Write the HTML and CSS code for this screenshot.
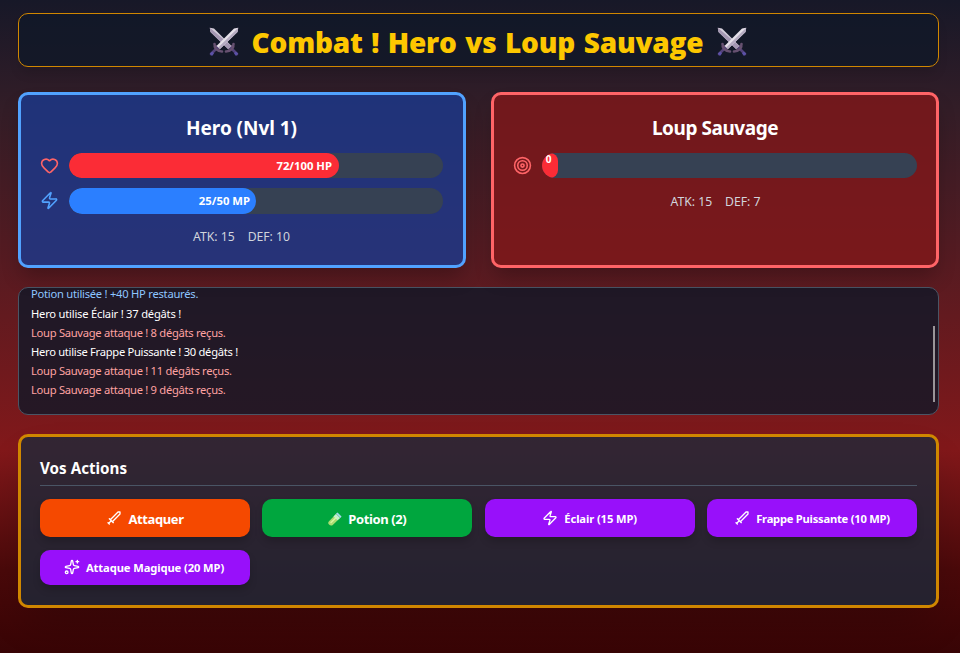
FILE: index.html
```html
<!DOCTYPE html>
<html lang="fr">
<head>
<meta charset="utf-8">
<title>Combat</title>
<link rel="stylesheet" href="styles.css">
</head>
<body>
<svg width="0" height="0" class="defs" aria-hidden="true">
  <defs>
    <symbol id="blades" viewBox="0 0 30 30">
      <path d="M4.500 19.500 8 18l4 6-2.500 1-5-5zM25.500 19.500 22 18l-4 6 2.500 1 5-5z" fill="#5d4869"/>
      <path d="M2 27 8 21M28 27l-6-6" stroke="#54427a" stroke-width="2.600"/>
      <path d="M.8 26.500 3.200 24.500 5 26.500 3 29zM29.200 26.500 26.800 24.500 25 26.500 27 29z" fill="#5b51a8"/>
      <path d="M.8.800 5 1.500 22.500 19 19 22 1.500 5z" fill="#d5cfdc"/>
      <path d="M.8.800 22.500 19 19 22 1.500 5z" fill="#a598b3"/>
      <path d="M29.200.800 25 1.500 7.500 19 11 22 28.500 5z" fill="#e5e0e9"/>
      <path d="M29.200.800 9.200 20.500 11 22 28.500 5z" fill="#b5abc1"/>
      <path d="M5.500 17c0 4.500 3 7.500 7.500 7.500M24.500 17c0 4.500-3 7.500-7.500 7.500" fill="none" stroke="#665070" stroke-width="2.600"/>
    </symbol>
    <symbol id="heart" viewBox="0 0 24 24"><path d="M2 9.500a5.500 5.500 0 0 1 9.591-3.676.56.56 0 0 0 .818 0A5.490 5.490 0 0 1 22 9.500c0 2.290-1.500 4-3 5.500l-5.492 5.313a2 2 0 0 1-3 .019L5 15c-1.500-1.500-3-3.200-3-5.500"/></symbol>
    <symbol id="zap" viewBox="0 0 24 24"><path d="M4 14a1 1 0 0 1-.78-1.630l9.900-10.200a.5.500 0 0 1 .86.460l-1.920 6.020A1 1 0 0 0 13 10h7a1 1 0 0 1 .78 1.630l-9.900 10.200a.5.500 0 0 1-.86-.46l1.920-6.020A1 1 0 0 0 11 14z"/></symbol>
    <symbol id="target" viewBox="0 0 24 24"><circle cx="12" cy="12" r="10"/><circle cx="12" cy="12" r="6"/><circle cx="12" cy="12" r="2"/></symbol>
    <symbol id="sword" viewBox="0 0 24 24"><path d="M14.500 17.500 3 6V3h3l11.500 11.500M13 19l6-6M16 16l4 4M19 21l2-2" transform="matrix(-1 0 0 1 24 0)"/></symbol>
    <symbol id="sparkles" viewBox="0 0 24 24"><path d="M11.017 2.814a1 1 0 0 1 1.966 0l1.051 5.558a2 2 0 0 0 1.594 1.594l5.558 1.051a1 1 0 0 1 0 1.966l-5.558 1.051a2 2 0 0 0-1.594 1.594l-1.051 5.558a1 1 0 0 1-1.966 0l-1.051-5.558a2 2 0 0 0-1.594-1.594l-5.558-1.051a1 1 0 0 1 0-1.966l5.558-1.051a2 2 0 0 0 1.594-1.594zM20 2v4M22 4h-4"/><circle cx="4" cy="20" r="2"/></symbol>
  </defs>
</svg>
<main class="arena">
  <header class="title-bar">
    <svg class="blades"><use href="#blades"/></svg>
    <h1>Combat ! Hero vs Loup Sauvage</h1>
    <svg class="blades"><use href="#blades"/></svg>
  </header>

  <section class="fighters">
    <article class="fighter hero">
      <h2>Hero (Nvl 1)</h2>
      <div class="stat">
        <svg class="icon red"><use href="#heart"/></svg>
        <div class="track"><div class="fill hp" style="width:72.2%">72/100 HP</div></div>
      </div>
      <div class="stat mana">
        <svg class="icon blue"><use href="#zap"/></svg>
        <div class="track"><div class="fill mp" style="width:50%">25/50 MP</div></div>
      </div>
      <p class="attrs"><span>ATK: 15</span><span>DEF: 10</span></p>
    </article>
    <article class="fighter enemy">
      <h2>Loup Sauvage</h2>
      <div class="stat">
        <svg class="icon red"><use href="#target"/></svg>
        <div class="track"><div class="fill hp empty">0</div></div>
      </div>
      <p class="attrs"><span>ATK: 15</span><span>DEF: 7</span></p>
    </article>
  </section>

  <section class="log">
    <div class="lines">
      <p class="heal">Potion utilisée ! +40 HP restaurés.</p>
      <p>Hero utilise Éclair ! 37 dégâts !</p>
      <p class="hurt">Loup Sauvage attaque ! 8 dégâts reçus.</p>
      <p>Hero utilise Frappe Puissante ! 30 dégâts !</p>
      <p class="hurt">Loup Sauvage attaque ! 11 dégâts reçus.</p>
      <p class="hurt">Loup Sauvage attaque ! 9 dégâts reçus.</p>
    </div>
    <div class="thumb"></div>
  </section>

  <section class="actions">
    <h3>Vos Actions</h3>
    <div class="grid">
      <button class="attack"><svg><use href="#sword"/></svg><span>Attaquer</span></button>
      <button class="potion">
        <svg viewBox="0 0 14 14"><path d="M8 2 12 6 4.500 13.200Q2.500 14 1 12.500T.8 9.500z" fill="#a9dc72"/><path d="M8 2 12 6 9.500 8.200 5.500 4.500z" fill="#c4efd0"/><path d="M8 1.500 9.500.500 13.500 4.500 12.500 6z" fill="#a9d8ef"/><path d="M3 10.500 8 5.800" stroke="#ddf7a4" stroke-width="1.300"/></svg>
        <span>Potion (2)</span></button>
      <button class="skill zap"><svg><use href="#zap"/></svg><span>Éclair (15 MP)</span></button>
      <button class="skill"><svg><use href="#sword"/></svg><span>Frappe Puissante (10 MP)</span></button>
      <button class="skill magic"><svg><use href="#sparkles"/></svg><span>Attaque Magique (20 MP)</span></button>
    </div>
  </section>
</main>
</body>
</html>
```
FILE: styles.css
```css
* { box-sizing: border-box; margin: 0; }
.defs { position: absolute; }
body {
  height: 653px;
  overflow: hidden;
  font-family: "Noto Sans", "Open Sans", sans-serif;
  color: #fff;
  background: linear-gradient(to bottom, #171828 0, #331d27 110px, #82181a 450px, #4a090a 570px, #380405 653px);
}
.arena { padding: 13px 21px 0 18px; }
.title-bar {
  height: 54px;
  display: flex;
  align-items: center;
  justify-content: center;
  gap: 13px;
  padding-right: 2px;
  border: 1px solid #d08700;
  border-radius: 10px;
  background: rgba(16, 24, 40, .8);
  box-shadow: 0 8px 12px -2px rgba(0, 0, 0, .12);
}
.title-bar h1 {
  width: 452px;
  white-space: nowrap;
  text-align: center;
  font-family: "Open Sans", "Noto Sans", sans-serif;
  font-size: 28px;
  line-height: 32px;
  font-weight: 800;
  color: #fdc700;
  letter-spacing: -.2px;
  word-spacing: 1.500px;
  margin-top: 3px;
}
.blades { width: 30px; height: 30px; margin-top: 3px; }
.fighters { display: grid; grid-template-columns: 1fr 1fr; gap: 25px; margin-top: 25px; }
.fighter {
  height: 176px;
  padding: 20px 20px 0 19px;
  border: 3px solid;
  border-radius: 10px;
  box-shadow: 0 12px 20px -4px rgba(0, 0, 0, .25);
}
.hero { border-color: #51a2ff; background: rgba(28, 57, 142, .8); }
.enemy { border-color: #ff6467; background: rgba(130, 24, 26, .8); padding-right: 19px; }
.fighter h2 { text-align: center; font-size: 19px; line-height: 26px; font-weight: 700; letter-spacing: -.25px; }
.hero h2 { letter-spacing: -.05px; }
.enemy h2 { letter-spacing: -.45px; }
.stat { display: flex; align-items: center; gap: 10px; margin-top: 12px; height: 25px; }
.stat.mana { height: 26px; margin-top: 10px; }
.icon { width: 19px; height: 19px; flex: none; }
.mana .icon { margin-top: -2px; }
svg { fill: none; stroke-width: 2; stroke-linecap: round; stroke-linejoin: round; }
.red { stroke: #ff6467; }
.blue { stroke: #51a2ff; }
.track { flex: 1; height: 100%; border-radius: 13px; background: #364153; overflow: hidden; }
.fill {
  display: flex;
  align-items: center;
  justify-content: flex-end;
  height: 100%;
  padding: 0 6px 1px;
  border-radius: 13px;
  font-size: 11.300px;
  font-weight: 700;
}
.hp { background: #fb2c36; padding-right: 7px; padding-bottom: 0; }
.mp { background: #2b7fff; }
.fill.empty { width: 16px; padding: 1px 3px 0 0; align-items: flex-start; justify-content: center; line-height: 10px; font-size: 10px; }
.attrs { display: flex; justify-content: center; gap: 13px; margin-top: 14px; font-size: 12.200px; line-height: 18px; color: #d1d5dc; }
.enemy .attrs { margin-top: 15px; padding-left: 1px; }
.log {
  height: 128px;
  margin-top: 19px;
  padding: 0 3px 0 12px;
  display: flex;
  justify-content: space-between;
  overflow: hidden;
  border: 1px solid #4a5565;
  border-radius: 10px;
  background: rgba(16, 24, 40, .8);
  font-size: 11.200px;
  line-height: 19px;
}
.lines { margin-top: -3.500px; letter-spacing: -.29px; }
.lines p { height: 19.100px; }
.lines .heal { color: #8ec5ff; letter-spacing: -.25px; margin-top: -.6px; height: 19.700px; }
.lines p:nth-child(2) { letter-spacing: -.22px; }
.hurt { color: #ffa2a2; }
.thumb { width: 2px; height: 76px; margin-top: 38px; background: #9a9599; }
.actions {
  height: 174px;
  margin-top: 19px;
  padding: 18px 19px;
  border: 3px solid #d08700;
  border-radius: 10px;
  background: rgba(30, 41, 57, .8);
  box-shadow: 0 20px 40px -10px rgba(0, 0, 0, .2);
}
.actions h3 { height: 31px; border-bottom: 1px solid #4a5565; font-size: 15.200px; line-height: 26px; font-weight: 700; }
.grid { display: grid; grid-template-columns: repeat(4, 210px); justify-content: space-between; grid-template-rows: 38px 35px; row-gap: 13px; margin-top: 13px; }
.grid button {
  display: flex;
  align-items: center;
  justify-content: center;
  gap: 6px;
  padding: 0;
  border: 0;
  border-radius: 10px;
  color: #fff;
  font: 700 11.200px "Noto Sans", "Open Sans", sans-serif;
  letter-spacing: -.24px;
  box-shadow: 0 5px 8px -1px rgba(0, 0, 0, .2);
}
.grid button svg { width: 16px; height: 16px; stroke: #fff; margin-top: -1px; }
.grid button.zap, .grid button.magic { letter-spacing: -.1px; }
.grid button.magic { padding-right: 2px; }
.grid button.attack, .grid button.potion { font-size: 13px; padding-top: 1px; letter-spacing: -.4px; }
.grid .potion svg { width: 14px; height: 14px; stroke: none; margin-top: 1px; }
.attack { background: #f54900; }
.potion { background: #00a63e; }
.skill { background: #9810fa; }
```
